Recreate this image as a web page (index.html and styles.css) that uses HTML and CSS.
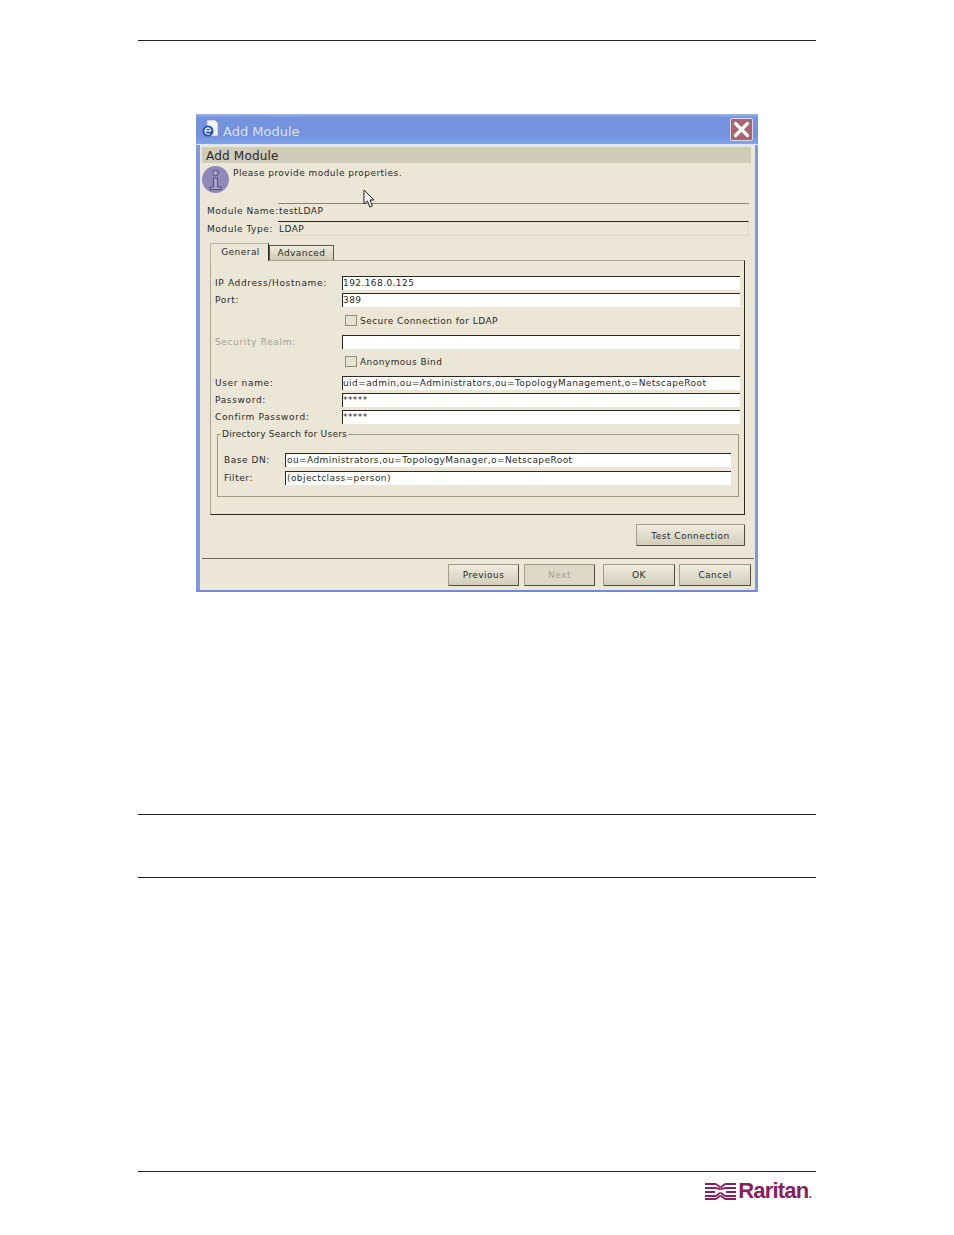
FILE: index.html
```html
<!DOCTYPE html>
<html lang="en">
<head>
    <meta charset="UTF-8">
    <title>Add Module</title>
    <link rel="stylesheet" href="styles.css">
</head>
<body>
    <div class="page">
        <hr class="rule">
        <div class="dialog">
            <div class="titlebar">
                <svg class="app-icon" width="18" height="18" viewBox="0 0 18 18">
                    <path d="M5 0h8l3 3v13H5z" fill="#f4f4f0" stroke="#8a94b0" stroke-width="0.6"/>
                    <circle cx="6" cy="11" r="5.5" fill="#1f4fa8"/>
                    <path d="M3 11h6M9 11a3 3 0 1 0-1 2.4M3 11a3 3 0 0 1 5-2.4" fill="none" stroke="#dfe9f8" stroke-width="1.3"/>
                </svg>
                <span class="title">Add Module</span>
                <div class="close">
                    <svg width="21" height="21" viewBox="0 0 21 21">
                        <path d="M4.5 4.5l12 12M16.5 4.5l-12 12" stroke="#fff" stroke-width="3.2" stroke-linecap="round"/>
                    </svg>
                </div>
            </div>
            <div class="dialog-body">
                <div class="section-head">Add Module</div>
                <div class="intro">
                    <svg class="info-icon" width="27" height="27" viewBox="0 0 27 27">
                        <circle cx="13.5" cy="13.5" r="13.5" fill="#9088b8"/>
                        <circle cx="13.5" cy="7" r="2.8" fill="#aaa3ca" stroke="#3f3860" stroke-width="0.8"/>
                        <path d="M11.5 12h4v9h3.5v2.5H8V21h3.5z" fill="#aaa3ca" stroke="#3f3860" stroke-width="0.8"/>
                    </svg>
                    <span>Please provide module properties.</span>
                </div>
                <div class="info-row">
                    <label>Module Name:</label>
                    <div class="info-value line-soft">testLDAP</div>
                </div>
                <div class="info-row">
                    <label>Module Type:</label>
                    <div class="info-value line-dark">LDAP</div>
                </div>

                <div class="tabs">
                    <div class="tab active">General</div>
                    <div class="tab">Advanced</div>
                </div>
                <div class="panel">
                    <div class="field">
                        <label>IP Address/Hostname:</label>
                        <div class="input">192.168.0.125</div>
                    </div>
                    <div class="field">
                        <label>Port:</label>
                        <div class="input">389</div>
                    </div>
                    <div class="check-row"><span class="check"></span>Secure Connection for LDAP</div>
                    <div class="field">
                        <label class="disabled">Security Realm:</label>
                        <div class="input"></div>
                    </div>
                    <div class="check-row tight"><span class="check"></span>Anonymous Bind</div>
                    <div class="field">
                        <label>User name:</label>
                        <div class="input">uid=admin,ou=Administrators,ou=TopologyManagement,o=NetscapeRoot</div>
                    </div>
                    <div class="field">
                        <label>Password:</label>
                        <div class="input">*****</div>
                    </div>
                    <div class="field">
                        <label>Confirm Password:</label>
                        <div class="input">*****</div>
                    </div>
                    <div class="group">
                        <span class="legend">Directory Search for Users</span>
                        <div class="group-field">
                            <label>Base DN:</label>
                            <div class="input">ou=Administrators,ou=TopologyManager,o=NetscapeRoot</div>
                        </div>
                        <div class="group-field">
                            <label>Filter:</label>
                            <div class="input">(objectclass=person)</div>
                        </div>
                    </div>
                </div>
                <div class="test-row">
                    <div class="btn btn-test">Test Connection</div>
                </div>
                <div class="actions">
                    <div class="btn">Previous</div>
                    <div class="btn disabled">Next</div>
                    <div class="btn btn-ok">OK</div>
                    <div class="btn btn-cancel">Cancel</div>
                </div>
            </div>
            <svg class="cursor" width="13" height="20" viewBox="0 0 13 20">
                <path d="M1 1v14l3.4-3 2.4 6 2.6-1-2.4-6H11z" fill="#fff" stroke="#222" stroke-width="1"/>
            </svg>
        </div>
        <hr class="rule rule-a">
        <hr class="rule rule-b">
        <hr class="rule rule-c">
        <div class="logo">
            <svg width="31" height="18" viewBox="0 0 31 18">
                <g stroke="#86205f" stroke-width="1.8" fill="none">
                    <path d="M0 2h10c3 0 3 3 5.500 3M0 6h10c2 0 3 1 5.500 1M0 10h10M0 14h10c3 0 3-3 5.500-3M0 17h10c3 0 3-3 5.500-3"/>
                    <path d="M31 2H21c-3 0-3 3-5.500 3M31 6H21c-2 0-3 1-5.500 1M31 10H21M31 14H21c-3 0-3-3-5.500-3M31 17H21c-3 0-3-3-5.500-3"/>
                </g>
            </svg>
            <span>Raritan<small>.</small></span>
        </div>
    </div>
</body>
</html>
```

FILE: styles.css
```css
* {
    box-sizing: border-box;
}

body {
    margin: 0;
    background: white;
    font-family: "DejaVu Sans", sans-serif;
    font-size: 9px;
    letter-spacing: 0.45px;
    color: #2a2a26;
}

label {
    letter-spacing: 0.55px;
    white-space: nowrap;
}

.page {
    width: 678px;
    margin-left: 138px;
    padding-top: 40px;
}

.rule {
    height: 1px;
    margin: 0;
    border: none;
    background: #222;
}

.rule-a {
    margin-top: 222px;
}

.rule-b {
    margin-top: 62px;
}

.rule-c {
    margin-top: 293px;
}

/* dialog window */
.dialog {
    position: relative;
    width: 562px;
    height: 478px;
    margin: 73px 0 0 58px;
    background: #ebe6d6;
    border: solid #8098e2;
    border-width: 0 3px 2px 4px;
    border-bottom-color: #6f8ad8;
    border-radius: 3px 3px 0 0;
}

.titlebar {
    display: flex;
    align-items: center;
    height: 31px;
    margin: 0 -3px 0 -4px;
    padding: 0 5px 0 6px;
    background: linear-gradient(#9db3e8 0, #7693de 12%, #7391dc 70%, #7fa5ec 100%);
    border-bottom: 1px solid #dfe6f5;
}

.title {
    margin: 4px 0 0 3px;
    color: #dbe3f5;
    font-size: 13px;
    letter-spacing: 0;
}

.close {
    width: 23px;
    height: 23px;
    margin-left: auto;
    background: #b0606f;
    border: 1px solid #d5dcee;
    border-radius: 2px;
}

.dialog-body {
    padding: 2px 0 0 2px;
}

.section-head {
    width: 549px;
    height: 16px;
    padding-left: 4px;
    background: #cfcbb9;
    font-size: 12px;
    letter-spacing: 0.2px;
    line-height: 18px;
}

.intro {
    display: flex;
    height: 40px;
    padding-top: 3px;
}

.intro span {
    margin: 2px 0 0 4px;
}

.info-icon {
    flex: none;
}

.info-row {
    display: flex;
    height: 18px;
    padding-left: 5px;
}

.info-row label {
    width: 71px;
    flex: none;
    line-height: 16px;
}

.info-value {
    width: 471px;
    padding-left: 1px;
    line-height: 15px;
}

.line-soft {
    border-top: 1px solid #8a8672;
}

.line-dark {
    height: 15px;
    border-top: 1px solid #2c2a20;
    border-right: 1px solid #e0dbc8;
    border-bottom: 1px solid #e0dbc8;
}

/* tabs */
.tabs {
    display: flex;
    align-items: flex-end;
    height: 21px;
    padding-left: 8px;
}

.tab {
    width: 65px;
    height: 15px;
    text-align: center;
    line-height: 15px;
    background: linear-gradient(#efebdd, #cfcbb8);
    border: 1px solid #5a5848;
    border-bottom: none;
}

.tab.active {
    position: relative;
    z-index: 1;
    width: 59px;
    height: 18px;
    margin-bottom: -1px;
    padding-left: 2px;
    line-height: 17px;
    background: #ebe6d6;
    border-color: #b8b4a0 #2c2a20 #ebe6d6 #b8b4a0;
}

.panel {
    width: 535px;
    height: 255px;
    margin-left: 8px;
    padding: 15px 5px 0 4px;
    border: 1px solid #2c2a20;
    border-color: #aaa690 #2c2a20 #2c2a20 #aaa690;
}

.field {
    display: grid;
    grid-template-columns: 127px 398px;
    align-items: center;
    height: 14px;
    margin-bottom: 3px;
}

.field label {
    letter-spacing: 0.65px;
}

.input {
    height: 14px;
    background: white;
    border-top: 1px solid #2c2a20;
    border-left: 1px solid #2c2a20;
    letter-spacing: 0.42px;
    line-height: 13px;
    white-space: nowrap;
    overflow: hidden;
}

.disabled {
    color: #a5a294;
}

.check-row {
    display: flex;
    align-items: center;
    height: 11px;
    margin: 8px 0 9px 130px;
}

.check-row.tight {
    margin-top: 7px;
}

.check {
    width: 12px;
    height: 11px;
    margin-right: 3px;
    background: #e6e2d2;
    border: 1px solid #8f8c7c;
}

/* directory search group */
.group {
    position: relative;
    width: 522px;
    height: 63px;
    margin: 10px 0 0 2px;
    padding: 18px 6px 0 6px;
    border: 1px solid #9d9a86;
}

.legend {
    position: absolute;
    top: -6px;
    left: 3px;
    padding: 0 1px;
    background: #ebe6d6;
    letter-spacing: 0.25px;
    line-height: 11px;
}

.group-field {
    display: grid;
    grid-template-columns: 61px 446px;
    align-items: center;
    height: 14px;
    margin-bottom: 4px;
}

.group-field .input {
    padding-left: 1px;
}

/* buttons */
.btn {
    height: 22px;
    text-align: center;
    line-height: 21px;
    background: linear-gradient(#f0ecdf, #d2ceba);
    border: 1px solid #6d6a58;
    border-color: #a09c88 #4e4c3e #4e4c3e #a09c88;
    border-radius: 1px;
}

.btn.disabled {
    background: #dcd8c6;
}

.test-row {
    display: flex;
    justify-content: flex-end;
    width: 543px;
    height: 43px;
    padding-top: 9px;
}

.btn-test {
    width: 109px;
    line-height: 22px;
}

.actions {
    display: flex;
    justify-content: flex-end;
    gap: 5px;
    width: 552px;
    height: 30px;
    padding: 5px 3px 0 0;
    border-top: 1px solid #6b6856;
}

.actions .btn {
    width: 71px;
}

.actions .btn-ok {
    width: 72px;
    margin-left: 3px;
    margin-right: -1px;
}

.actions .btn-cancel {
    width: 72px;
}

.cursor {
    position: absolute;
    top: 75px;
    left: 163px;
}

/* footer logo */
.logo {
    display: flex;
    align-items: center;
    justify-content: flex-end;
    gap: 2px;
    width: 673px;
    height: 20px;
    margin-top: 9px;
    color: #86205f;
    font-family: "Liberation Sans", sans-serif;
    font-size: 22px;
    font-weight: bold;
    letter-spacing: -0.8px;
}

.logo small {
    font-size: 12px;
    color: #666;
}
```
